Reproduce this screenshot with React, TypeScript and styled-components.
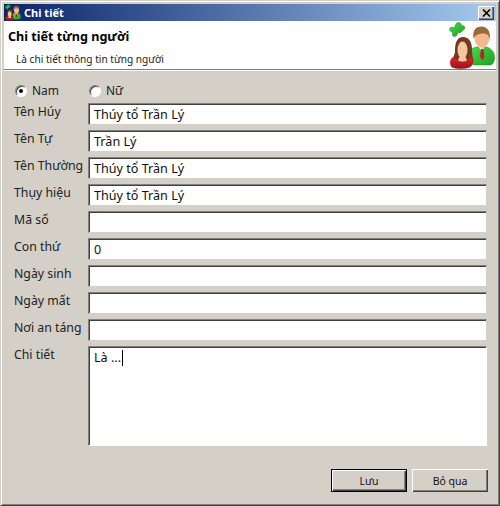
import React from "react";
import styled, { createGlobalStyle } from "styled-components";

const Global = createGlobalStyle`
  html, body { margin: 0; padding: 0; background: #d4d0c8; }
  body { font-family: "Noto Sans", "DejaVu Sans", sans-serif; font-size: 12px; color: #111; }
  * { box-sizing: border-box; }
`;

const Win = styled.div`
  width: 500px; height: 506px; background: #d4d0c8; display: flex; flex-direction: column;
  border-top: 1px solid #d4d0c8; border-left: 1px solid #d4d0c8;
  border-right: 1px solid #404040; border-bottom: 1px solid #404040;
  box-shadow: inset 1px 1px 0 #fff, inset -1px -1px 0 #808080;
  padding: 3px; overflow: hidden;
`;
const TitleBar = styled.div`
  height: 17px; flex: none; display: flex; align-items: center; padding: 0 2px 0 1px; gap: 3px;
  background: linear-gradient(90deg, #0a246a 0%, #a6caf0 100%);
  color: #fff; font-weight: 700; font-size: 11px;
`;
const TitleText = styled.span` flex: 1; line-height: 17px; `;
const CloseBtn = styled.div`
  width: 16px; height: 14px; background: #d4d0c8; display: flex; align-items: center; justify-content: center;
  box-shadow: inset 1px 1px 0 #fff, inset -1px -1px 0 #404040, inset -2px -2px 0 #808080;
`;
const Header = styled.div`
  height: 49px; flex: none; background: #fff; display: flex; justify-content: space-between;
  border-bottom: 1px solid #808080; box-shadow: 0 1px 0 #fff;
`;
const HeaderText = styled.div` padding: 7px 0 0 4px; `;
const HeaderTitle = styled.div` font-weight: 700; font-size: 12.6px; line-height: 18px; color: #000; `;
const HeaderSub = styled.div` font-size: 10.1px; line-height: 15px; padding: 6px 0 0 8px; color: #222; `;
const LogoWrap = styled.div` width: 46px; height: 48px; margin-right: 1px; `;

const Form = styled.div`
  flex: 1; display: flex; flex-direction: column; padding: 11px 9px 0 6px;
`;
const RadioRow = styled.div` display: flex; height: 19px; align-items: center; padding-left: 5px; margin-bottom: 3px; `;
const RadioItem = styled.label` display: flex; align-items: center; gap: 5px; width: 74px; font-size: 12px; color: #222; `;
const RadioDot = styled.span<{ $on?: boolean }>`
  width: 12px; height: 12px; border-radius: 50%; background: #fff; display: inline-flex; align-items: center; justify-content: center;
  border: 1px solid; border-color: #808080 #fff #fff #808080; box-shadow: inset 1px 1px 0 #404040;
  &::after { content: ""; width: 4px; height: 4px; border-radius: 50%; background: ${p => (p.$on ? "#000" : "transparent")}; }
`;
const Rows = styled.div` display: grid; grid-template-columns: 78px 399px; row-gap: 5px; `;
const Label = styled.div` font-size: 12.3px; line-height: 17px; color: #222; padding-left: 4px; white-space: nowrap; `;
const Field = styled.div`
  height: 22px; background: #fff; font-size: 12.6px; line-height: 18px; padding: 2px 5px 0; color: #111; white-space: nowrap;
  border: 1px solid; border-color: #808080 #d4d0c8 #d4d0c8 #808080;
  box-shadow: inset 1px 1px 0 #404040;
`;
const AreaField = styled(Field)`
  height: 100px; padding-top: 2px;
  display: block; border-color: #808080 #fff #fff #808080;
`;
const Caret = styled.span` display: inline-block; width: 1px; height: 16px; background: #000; vertical-align: -4px; margin-left: 1px; `;
const Footer = styled.div` display: flex; justify-content: flex-end; gap: 5px; margin: 23px -1px 0 0; `;
const Btn = styled.div<{ $def?: boolean }>`
  width: 76px; height: 23px; display: flex; align-items: center; justify-content: center; font-size: 10.5px; color: #111;
  background: #d4d0c8;
  border: ${p => (p.$def ? "1px solid #000" : "0")};
  box-shadow: inset 1px 1px 0 #fff, inset -1px -1px 0 #404040, inset -2px -2px 0 #808080;
`;

const fields: [string, string][] = [
  ["Tên Húy", "Thúy tổ Trần Lý"],
  ["Tên Tự", "Trần Lý"],
  ["Tên Thường", "Thúy tổ Trần Lý"],
  ["Thụy hiệu", "Thúy tổ Trần Lý"],
  ["Mã số", ""],
  ["Con thứ", "0"],
  ["Ngày sinh", ""],
  ["Ngày mất", ""],
  ["Nơi an táng", ""],
];

const Family = ({ size, id }: { size: number; id: string }) => (
  <svg width={size} height={size * 48 / 46} viewBox="0 0 46 48">
    <defs>
      <linearGradient id={`sh${id}`} x1="0" x2="1" y1="0" y2="1"><stop offset="0" stopColor="#4ed94e" /><stop offset="1" stopColor="#18a020" /></linearGradient>
      <linearGradient id={`dr${id}`} x1="0" x2="0" y1="0" y2="1"><stop offset="0" stopColor="#d8262c" /><stop offset="1" stopColor="#9c1218" /></linearGradient>
    </defs>
    <path d="M7 3 C8 1 11 1 12 3 L12.5 5 C15 4 16.5 6 15.5 8 L13 10 C12 12 10 12 9 11 L8 14 C6 16.5 3 15.5 3.5 13 L4 11 C1 11 0 8.5 1 7 C2 6 4 6 5.5 7 Z" fill={`url(#sh${id})`} stroke="#149018" strokeWidth="0.6" />
    <path d="M27 26 L38 26 C43 28 46 32 45.5 38 C45 41 44 43 42 44 L24 44 L22 28 Z" fill={`url(#sh${id})`} stroke="#129018" strokeWidth="0.5" />
    <path d="M29 25 L36 25 L33 31 Z" fill="#dfe8fb" />
    <path d="M32 28 L34.5 28 L35.5 36 L33.2 39 L31 36 Z" fill="#c22020" />
    <ellipse cx="33" cy="17" rx="7.5" ry="9.5" fill="#f2b98a" />
    <path d="M24.5 18 C23 8 28 5 33 5.5 C39 6 42 11 40.5 19 C40 14 38 12 33 12.5 C29 13 26 14 24.5 18 Z" fill="#9a6a3a" />
    <path d="M6 30 C6 20 9 16 14 16 C20 16 23 21 23 29 C23 34 24 37 24 41 L4 41 C3 37 6 34 6 30 Z" fill="#74391f" />
    <ellipse cx="13.5" cy="29" rx="5" ry="8.5" fill="#f6c79d" />
    <path d="M11 35 L16 35 L19 41 L8 41 Z" fill="#f6c79d" />
    <path d="M3 37 C5 36 7 36 8.5 39 C10 41.5 17 41.5 18.5 39 C20 36 22 36 23.5 37 C25 40 24 44 21 46 C16 48 7 48 3 46 C0.5 43 1 40 3 37 Z" fill={`url(#dr${id})`} stroke="#8a1015" strokeWidth="0.5" />
  </svg>
);

export default function App() {
  return (
    <Win>
      <Global />
      <TitleBar>
        <Family size={16} id="a" />
        <TitleText>Chi tiết</TitleText>
        <CloseBtn>
          <svg width="9" height="8" viewBox="0 0 9 8"><path d="M1 0.5 L8 7.5 M8 0.5 L1 7.5" stroke="#000" strokeWidth="1.6" /></svg>
        </CloseBtn>
      </TitleBar>
      <Header>
        <HeaderText>
          <HeaderTitle>Chi tiết từng người</HeaderTitle>
          <HeaderSub>Là chi tiết thông tin từng người</HeaderSub>
        </HeaderText>
        <LogoWrap><Family size={46} id="b" /></LogoWrap>
      </Header>
      <Form>
        <RadioRow>
          <RadioItem><RadioDot $on />Nam</RadioItem>
          <RadioItem><RadioDot />Nữ</RadioItem>
        </RadioRow>
        <Rows>
          {fields.map(([l, v]) => (
            <React.Fragment key={l}>
              <Label>{l}</Label>
              <Field>{v}</Field>
            </React.Fragment>
          ))}
          <Label>Chi tiết</Label>
          <AreaField>Là ...<Caret /></AreaField>
        </Rows>
        <Footer>
          <Btn $def>Lưu</Btn>
          <Btn>Bỏ qua</Btn>
        </Footer>
      </Form>
    </Win>
  );
}
